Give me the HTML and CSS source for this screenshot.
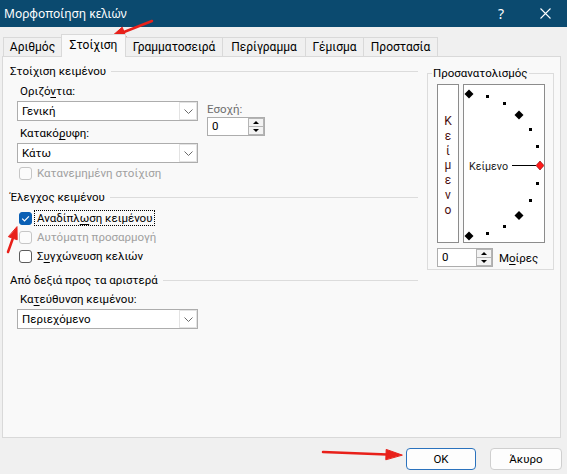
FILE: index.html
```html
<!DOCTYPE html>
<html lang="el">
<head>
<meta charset="utf-8">
<title>Μορφοποίηση κελιών</title>
<link rel="stylesheet" href="styles.css">
</head>
<body>
<header class="titlebar">
  <span class="title">Μορφοποίηση κελιών</span>
  <span class="help">?</span>
  <svg class="close" width="11" height="11" viewBox="0 0 11 11"><path d="M0.5 0.5 L10.5 10.5 M10.5 0.5 L0.5 10.5" stroke="#fff" stroke-width="1.1" fill="none"/></svg>
</header>
<nav class="tabs">
  <div class="tab">Αριθμός</div>
  <div class="tab active">Στοίχιση</div>
  <div class="tab">Γραμματοσειρά</div>
  <div class="tab">Περίγραμμα</div>
  <div class="tab">Γέμισμα</div>
  <div class="tab">Προστασία</div>
</nav>
<main class="panel">
  <div class="left">
    <div class="group-head">Στοίχιση κειμένου</div>
    <div class="align-row">
      <div class="align-col">
        <div class="label">Οριζό<u>ν</u>τια:</div>
        <div class="combo">
          <span class="combo-text">Γενική</span>
          <span class="combo-btn"><svg width="9" height="5" viewBox="0 0 9 5"><path d="M0.5 0.5 L4.5 4.5 L8.5 0.5" fill="none" stroke="#6a6a6a"/></svg></span>
        </div>
        <div class="label">Κατακό<u>ρ</u>υφη:</div>
        <div class="combo">
          <span class="combo-text">Κάτω</span>
          <span class="combo-btn"><svg width="9" height="5" viewBox="0 0 9 5"><path d="M0.5 0.5 L4.5 4.5 L8.5 0.5" fill="none" stroke="#6a6a6a"/></svg></span>
        </div>
      </div>
      <div class="indent-col">
        <div class="label dim">Εσοχή:</div>
        <div class="spin">
          <span class="spin-val">0</span>
          <span class="spin-btns"><span><i class="tri-up"></i></span><span><i class="tri-down"></i></span></span>
        </div>
      </div>
    </div>
    <div class="check disabled"><span class="box"></span><span class="ctext">Κατανεμημένη στοίχιση</span></div>

    <div class="group-head sec">Έλεγχος κειμένου</div>
    <div class="check checked first2"><span class="box"><svg width="11" height="11" viewBox="0 0 11 11"><path d="M2.2 5.6 L4.5 7.9 L8.9 3.3" stroke="#fff" stroke-width="1.2" fill="none"/></svg></span><span class="ctext focus">Αναδίπλ<u>ω</u>ση κειμένου</span></div>
    <div class="check disabled"><span class="box"></span><span class="ctext">Αυτόματη προσαρμογή</span></div>
    <div class="check"><span class="box"></span><span class="ctext">Σ<u>υ</u>γχώνευση κελιών</span></div>

    <div class="group-head sec">Από δεξιά προς τα αριστερά</div>
    <div class="label l3">Κα<u>τ</u>εύθυνση κειμένου:</div>
    <div class="combo">
      <span class="combo-text">Περιεχόμενο</span>
      <span class="combo-btn"><svg width="9" height="5" viewBox="0 0 9 5"><path d="M0.5 0.5 L4.5 4.5 L8.5 0.5" fill="none" stroke="#6a6a6a"/></svg></span>
    </div>
  </div>

  <fieldset class="orient">
    <legend>Προσανατολισμός</legend>
    <div class="orient-boxes">
      <div class="vtext"><span class="vword">Κείμενο</span></div>
      <div class="dial">
        <svg class="dial-svg" width="80" height="157" viewBox="0 0 80 157">
          <g fill="#000">
            <rect x="22" y="10" width="3" height="3"/>
            <rect x="39" y="17" width="3" height="3"/>
            <rect x="65" y="43" width="3" height="3"/>
            <rect x="72" y="60" width="3" height="3"/>
            <rect x="72" y="97" width="3" height="3"/>
            <rect x="65" y="114" width="3" height="3"/>
            <rect x="39" y="140" width="3" height="3"/>
            <rect x="22" y="147" width="3" height="3"/>
            <path d="M5 4.5 L9.5 9 L5 13.5 L0.5 9 Z"/>
            <path d="M55 25.5 L59.5 30 L55 34.5 L50.5 30 Z"/>
            <path d="M55 126 L59.5 130.5 L55 135 L50.5 130.5 Z"/>
            <path d="M5 146.5 L9.5 151 L5 155.5 L0.5 151 Z"/>
          </g>
          <text x="5" y="85" class="dial-text" textLength="39" lengthAdjust="spacingAndGlyphs">Κείμενο</text>
          <line x1="48" y1="80.5" x2="72" y2="80.5" stroke="#000" stroke-width="1"/>
          <path d="M76 76 L80 80.5 L76 85 L72 80.5 Z" fill="#ff1a1a" stroke="#7a0000" stroke-width="0.6"/>
        </svg>
      </div>
    </div>
    <div class="deg-row">
      <div class="spin">
        <span class="spin-val">0</span>
        <span class="spin-btns"><span><i class="tri-up"></i></span><span><i class="tri-down"></i></span></span>
      </div>
      <span class="deg-label">Μ<u>ο</u>ίρες</span>
    </div>
  </fieldset>
</main>
<footer class="footer">
  <div class="btn btn-ok">OK</div>
  <div class="btn btn-cancel">Άκυρο</div>
</footer>
<svg class="arrows" width="567" height="474" viewBox="0 0 567 474">
  <g fill="#e8201a" stroke="#e8201a" stroke-linecap="round">
    <line x1="152" y1="21" x2="124" y2="32" stroke-width="2.5"/>
    <path d="M111 37 L122.2 27.2 L125.9 36.6 Z" stroke-width="1"/>
    <line x1="8" y1="252" x2="13" y2="238" stroke-width="2.5"/>
    <path d="M17 227 L17.2 239.8 L8.7 236.8 Z" stroke-width="1"/>
    <line x1="323" y1="452" x2="387" y2="454.4" stroke-width="2.5"/>
    <path d="M402 455 L386.2 449.4 L385.8 459.4 Z" stroke-width="1"/>
  </g>
</svg>
</body>
</html>
```

FILE: styles.css
```css
* { box-sizing: border-box; }
html, body { margin: 0; padding: 0; }
body {
  width: 567px;
  height: 474px;
  overflow: hidden;
  position: relative;
  background: #f0f0f0;
  font-family: Roboto, "Noto Sans", "DejaVu Sans", sans-serif;
  font-size: 11.5px;
  color: #000;
}
u { text-decoration-thickness: 1px; text-underline-offset: 2px; }

.titlebar {
  height: 27px;
  background: #0b4a6f;
  color: #fff;
  display: flex;
  align-items: center;
  padding-left: 4px;
  font-family: "Noto Sans", Roboto, sans-serif;
  font-size: 12px;
}
.title { flex: 1; line-height: 16px; }
.help { width: 20px; text-align: center; font-size: 14px; margin-right: 29px; }
.close { margin-right: 16px; }

.tabs {
  display: flex;
  align-items: flex-end;
  height: 29px;
  padding-left: 3px;
  font-size: 12px;
}
.tab {
  height: 19px;
  line-height: 18px;
  border: 1px solid #d9d9d9;
  border-bottom: none;
  margin-right: -1px;
  background: #f0f0f0;
  text-align: center;
  white-space: nowrap;
}
.tab:nth-child(1) { width: 59px; }
.tab:nth-child(2) { width: 65px; }
.tab:nth-child(3) { width: 98px; }
.tab:nth-child(4) { width: 84px; }
.tab:nth-child(5) { width: 59px; }
.tab:nth-child(6) { width: 75px; }
.tab.active {
  height: 23px;
  line-height: 20px;
  padding-bottom: 2px;
  margin-bottom: -1px;
  background: #f9f9f9;
  position: relative;
  z-index: 1;
}

.panel {
  margin-left: 2px;
  width: 559px;
  height: 382px;
  border: 1px solid #d9d9d9;
  background: #f9f9f9;
  display: grid;
  grid-template-columns: 408px 127px;
  column-gap: 9px;
  align-items: start;
  padding: 6px 6px 0 7px;
}

.group-head {
  display: flex;
  align-items: center;
  height: 16px;
  line-height: 16px;
  white-space: nowrap;
}
.group-head::after {
  content: "";
  flex: 1;
  border-top: 1px solid #dcdcdc;
  margin-left: 5px;
}
.group-head.sec { margin-top: 7px; }

.label {
  height: 16px;
  line-height: 16px;
  padding-left: 10px;
  margin-top: 4px;
  white-space: nowrap;
}
.label.dim { color: #6d6d6d; padding-left: 0; margin-top: 0; }
.label.l3 { margin-top: 3px; }

.align-row { display: flex; }
.align-col { width: 188px; }
.indent-col { margin-left: 9px; padding-top: 22px; }

.combo {
  display: flex;
  width: 181px;
  height: 20px;
  margin: 2px 0 0 7px;
  border: 1px solid #adadad;
  background: #fff;
}
.combo-text { flex: 1; padding-left: 4px; line-height: 18px; }
.combo-btn {
  width: 18px;
  display: flex;
  align-items: center;
  justify-content: center;
  border: 1px solid #e3e3e3;
}

.spin {
  display: flex;
  width: 58px;
  height: 19px;
  border: 1px solid #adadad;
  background: #fff;
}
.spin-val { flex: 1; padding-left: 4px; line-height: 17px; }
.spin-btns {
  width: 16px;
  display: flex;
  flex-direction: column;
  border: 1px solid #b5b5b5;
}
.spin-btns span {
  flex: 1;
  display: flex;
  align-items: center;
  justify-content: center;
  background: #f3f3f3;
}
.spin-btns span + span { border-top: 1px solid #b5b5b5; }
.tri-up, .tri-down {
  display: block;
  width: 0;
  height: 0;
  border-left: 3px solid transparent;
  border-right: 3px solid transparent;
}
.tri-up { border-bottom: 3px solid #000; }
.tri-down { border-top: 3px solid #000; }

.check {
  display: flex;
  align-items: center;
  height: 18px;
  margin-top: 1px;
  padding-left: 9px;
  white-space: nowrap;
}
.check.first2 { margin-top: 4px; }
.box {
  width: 13px;
  height: 13px;
  border: 1px solid #5c5c5c;
  border-radius: 3px;
  background: #fff;
  display: flex;
  align-items: center;
  justify-content: center;
  margin-right: 3px;
}
.ctext { padding: 0 2px; line-height: 14px; }
.ctext.focus { outline: 1px dotted #000; }
.checked .box { background: #0a5fb4; border-color: #0a5fb4; }
.disabled .box { border-color: #c6c6c6; background: #fbfbfb; }
.disabled .ctext { color: #a0a0a0; }

.orient {
  margin: 2px 0 0;
  padding: 3px 8px 2px 9px;
  border: 1px solid #dcdcdc;
  min-width: 0;
}
.orient legend {
  padding: 0 1px;
  margin-left: -5px;
  line-height: 16px;
}
.orient-boxes { display: flex; gap: 4px; }
.vtext {
  width: 22px;
  height: 159px;
  border: 1px solid #8c8c8c;
  background: #fff;
  display: flex;
  align-items: center;
  justify-content: center;
  padding-top: 4px;
  color: #4a0f0f;
  font-size: 12px;
}
.vword {
  writing-mode: vertical-lr;
  text-orientation: upright;
  letter-spacing: 0.8px;
  line-height: 14px;
}
.dial {
  width: 82px;
  height: 159px;
  border: 1px solid #8c8c8c;
  background: #fff;
  position: relative;
}
.dial-svg { position: absolute; left: 0; top: 0; }
.dial-text {
  font-family: Roboto, "Noto Sans", sans-serif;
  font-size: 11.5px;
  fill: #1a1a1a;
}
.deg-row {
  display: flex;
  align-items: center;
  gap: 6px;
  margin-top: 5px;
}
.deg-row .spin { width: 56px; }

.footer {
  display: flex;
  justify-content: flex-end;
  gap: 14px;
  padding: 10px 5px 0 0;
}
.btn {
  height: 22px;
  line-height: 20px;
  border: 1px solid #cfcfcf;
  border-radius: 4px;
  background: #fdfdfd;
  text-align: center;
}
.btn-ok { width: 70px; border-color: #2a72bd; }
.btn-cancel { width: 72px; }

.arrows {
  position: absolute;
  left: 0;
  top: 0;
  pointer-events: none;
}
```
